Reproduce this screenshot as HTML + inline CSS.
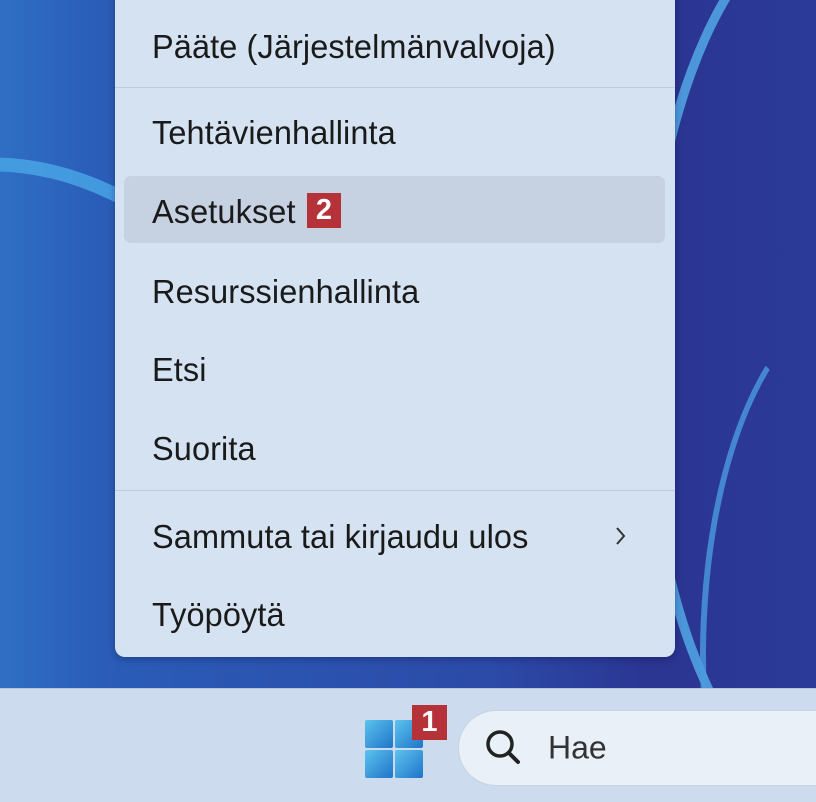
<!DOCTYPE html>
<html><head><meta charset="utf-8"><style>
html,body{margin:0;padding:0;width:816px;height:802px;overflow:hidden}
body{position:relative;font-family:"Liberation Sans",sans-serif;
background:linear-gradient(90deg,#2f6fc4 0%,#2a5db8 12%,#2c4aa8 60%,#2b3592 80%,#2b3a98 100%);}
.bg{position:absolute;left:0;top:0;width:816px;height:802px;overflow:hidden}
.sw{position:absolute;border-radius:50%;border-style:solid;border-color:#4fa6e6;opacity:.8}
.menu{position:absolute;left:115px;top:-20px;width:560px;height:677px;background:#d5e2f1;border-radius:10px;
box-shadow:0 2px 8px rgba(0,0,40,.3)}
.it{position:absolute;left:152px;font-size:32.5px;color:#1a1a1a;line-height:1;transform:translateY(-50%) scaleY(1.03);letter-spacing:0.1px}
.div{position:absolute;left:115px;width:560px;height:1px;background:#bfcbdb}
.hov{position:absolute;left:124px;top:176px;width:541px;height:67px;background:#c6d1e2;border-radius:7px}
.badge{position:absolute;background:#b53338;color:#fff;font-weight:bold;font-size:29px;text-align:center;line-height:35px}
.task{position:absolute;left:0;top:688px;width:816px;height:114px;background:#cddbee;border-top:1px solid #b6c4d8;box-sizing:border-box}
.search{position:absolute;left:458px;top:710px;width:358px;height:76px;border-radius:38px 0 0 38px;background:#e9f0f8;border:1px solid #c7d3e2;border-right:none;box-sizing:border-box}
</style></head><body>
<div class="bg">
<div class="sw" style="left:-260px;top:150px;width:560px;height:700px;border-width:14px;border-color:#4aa8e8 transparent transparent transparent;transform:rotate(-20deg)"></div>
<div class="sw" style="left:640px;top:-100px;width:400px;height:900px;border-width:10px;border-color:transparent transparent transparent #55b0ec"></div>
<div class="sw" style="left:700px;top:300px;width:300px;height:700px;border-width:6px;border-color:transparent transparent transparent #4b9ae0"></div>
</div>
<div class="menu"></div>
<div class="div" style="top:87px"></div>
<div class="div" style="top:490px"></div>
<div class="hov"></div>
<div class="it" style="top:47px">Pääte (Järjestelmänvalvoja)</div>
<div class="it" style="top:133px">Tehtävienhallinta</div>
<div class="it" style="top:212px">Asetukset</div>
<div class="badge" style="left:307px;top:193px;width:34px;height:35px">2</div>
<div class="it" style="top:292px">Resurssienhallinta</div>
<div class="it" style="top:370px">Etsi</div>
<div class="it" style="top:449px">Suorita</div>
<div class="it" style="top:537px">Sammuta tai kirjaudu ulos</div>
<svg style="position:absolute;left:614px;top:525px" width="14" height="22"><path d="M3 3 L10 11 L3 19" fill="none" stroke="#333" stroke-width="2"/></svg>
<div class="it" style="top:615px">Työpöytä</div>
<div class="task"></div>
<svg style="position:absolute;left:365px;top:720px" width="58" height="58">
<defs><linearGradient id="g" x1="0" y1="0" x2="1" y2="1"><stop offset="0" stop-color="#5cc3ee"/><stop offset="1" stop-color="#1f74c8"/></linearGradient></defs>
<rect x="0" y="0" width="28" height="28" rx="2" fill="url(#g)"/><rect x="30" y="0" width="28" height="28" rx="2" fill="url(#g)"/>
<rect x="0" y="30" width="28" height="28" rx="2" fill="url(#g)"/><rect x="30" y="30" width="28" height="28" rx="2" fill="url(#g)"/></svg>
<div class="badge" style="left:412px;top:705px;width:35px;height:35px">1</div>
<div class="search"></div>
<svg style="position:absolute;left:484px;top:728px" width="40" height="40"><circle cx="16" cy="16" r="12" fill="none" stroke="#222" stroke-width="3.5"/><path d="M25 25 L34 34" stroke="#222" stroke-width="4" stroke-linecap="round"/></svg>
<div style="position:absolute;left:548px;top:748px;transform:translateY(-50%);font-size:32px;color:#333">Hae</div>
</body></html>
